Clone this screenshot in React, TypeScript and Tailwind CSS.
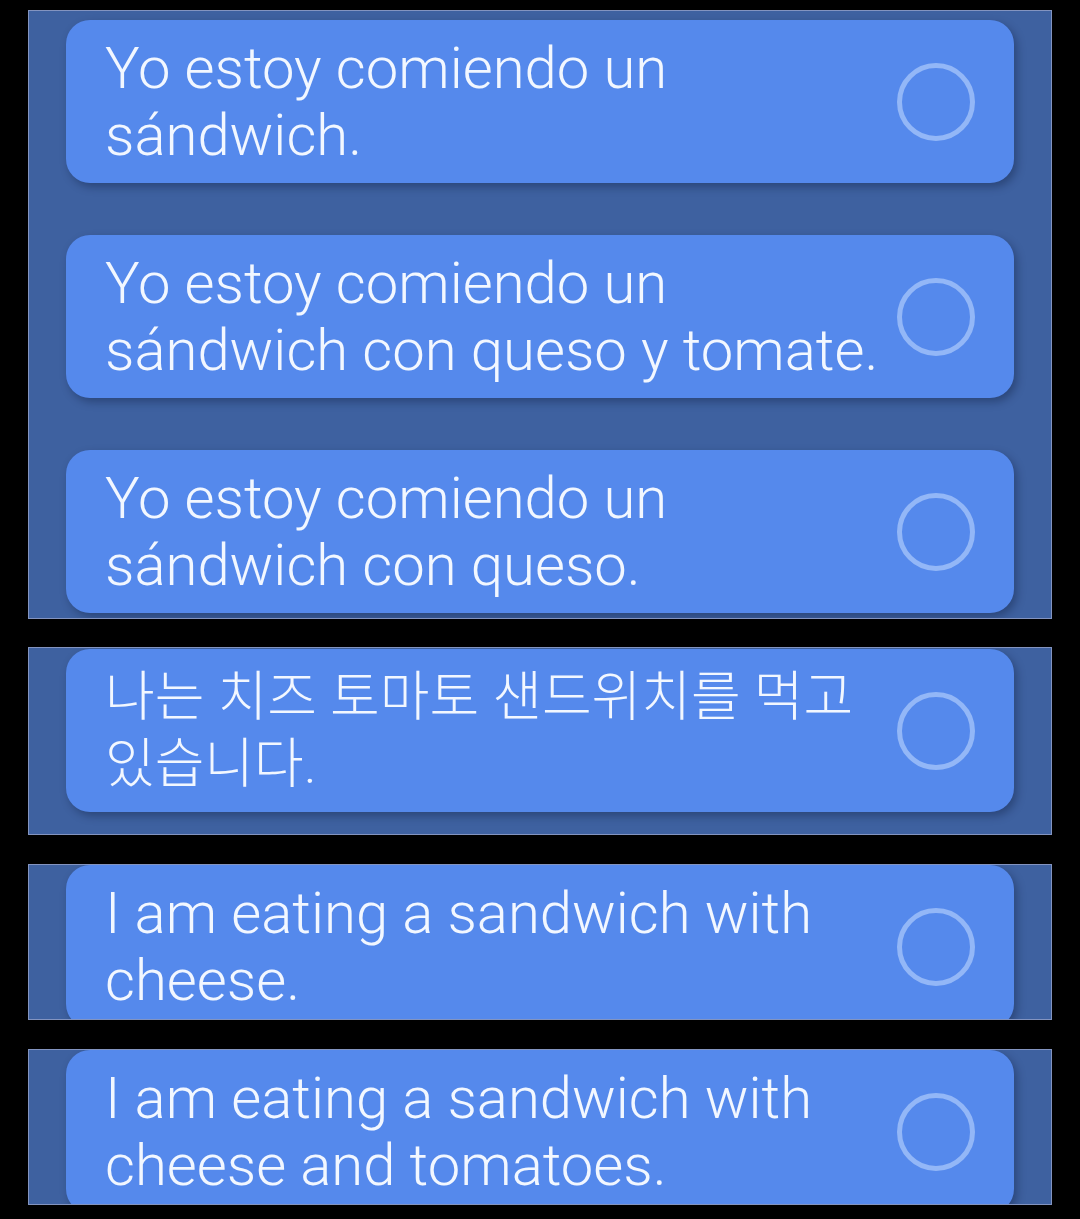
import React from 'react';

const FONT = { fontFamily: '"Roboto Light", Roboto, "Noto Sans CJK KR", "Noto Sans", sans-serif' };

function OptionCard({ text, korean = false }: { text: string; korean?: boolean }) {
  return (
    <div className="flex h-[163px] shrink-0 items-center rounded-[24px] bg-[#5589ec] pl-[39px] pr-[39px] shadow-[3px_4px_8px_rgba(10,20,50,0.35)]">
      <div
        className={`min-w-0 flex-1 font-light leading-[67px] text-[#f2f7ff] ${
          korean ? 'text-[54px]' : 'text-[58px]'
        }`}
      >
        {text}
      </div>
      <div className="h-[78px] w-[78px] shrink-0 rounded-full border-[5px] border-[#93b7f7]" />
    </div>
  );
}

function Panel({ height, children, className = '' }: { height: number; children: React.ReactNode; className?: string }) {
  return (
    <div
      className={`mx-[28px] flex flex-col overflow-hidden border border-[#8394c0] bg-[#3e61a0] px-[37px] ${className}`}
      style={{ height }}
    >
      {children}
    </div>
  );
}

export default function App() {
  return (
    <div className="min-h-[1219px] w-[1080px] bg-black pt-[10px]" style={FONT}>
      <Panel height={609} className="gap-[52px] pt-[9px]">
        <OptionCard text="Yo estoy comiendo un sándwich." />
        <OptionCard text="Yo estoy comiendo un sándwich con queso y tomate." />
        <OptionCard text="Yo estoy comiendo un sándwich con queso." />
      </Panel>

      <div className="mt-[28px]">
        <Panel height={188} className="pt-[1px]">
          <OptionCard korean text="나는 치즈 토마토 샌드위치를 먹고 있습니다." />
        </Panel>
      </div>

      <div className="mt-[29px]">
        <Panel height={156}>
          <OptionCard text="I am eating a sandwich with cheese." />
        </Panel>
      </div>

      <div className="mt-[29px]">
        <Panel height={156}>
          <OptionCard text="I am eating a sandwich with cheese and tomatoes." />
        </Panel>
      </div>
    </div>
  );
}
